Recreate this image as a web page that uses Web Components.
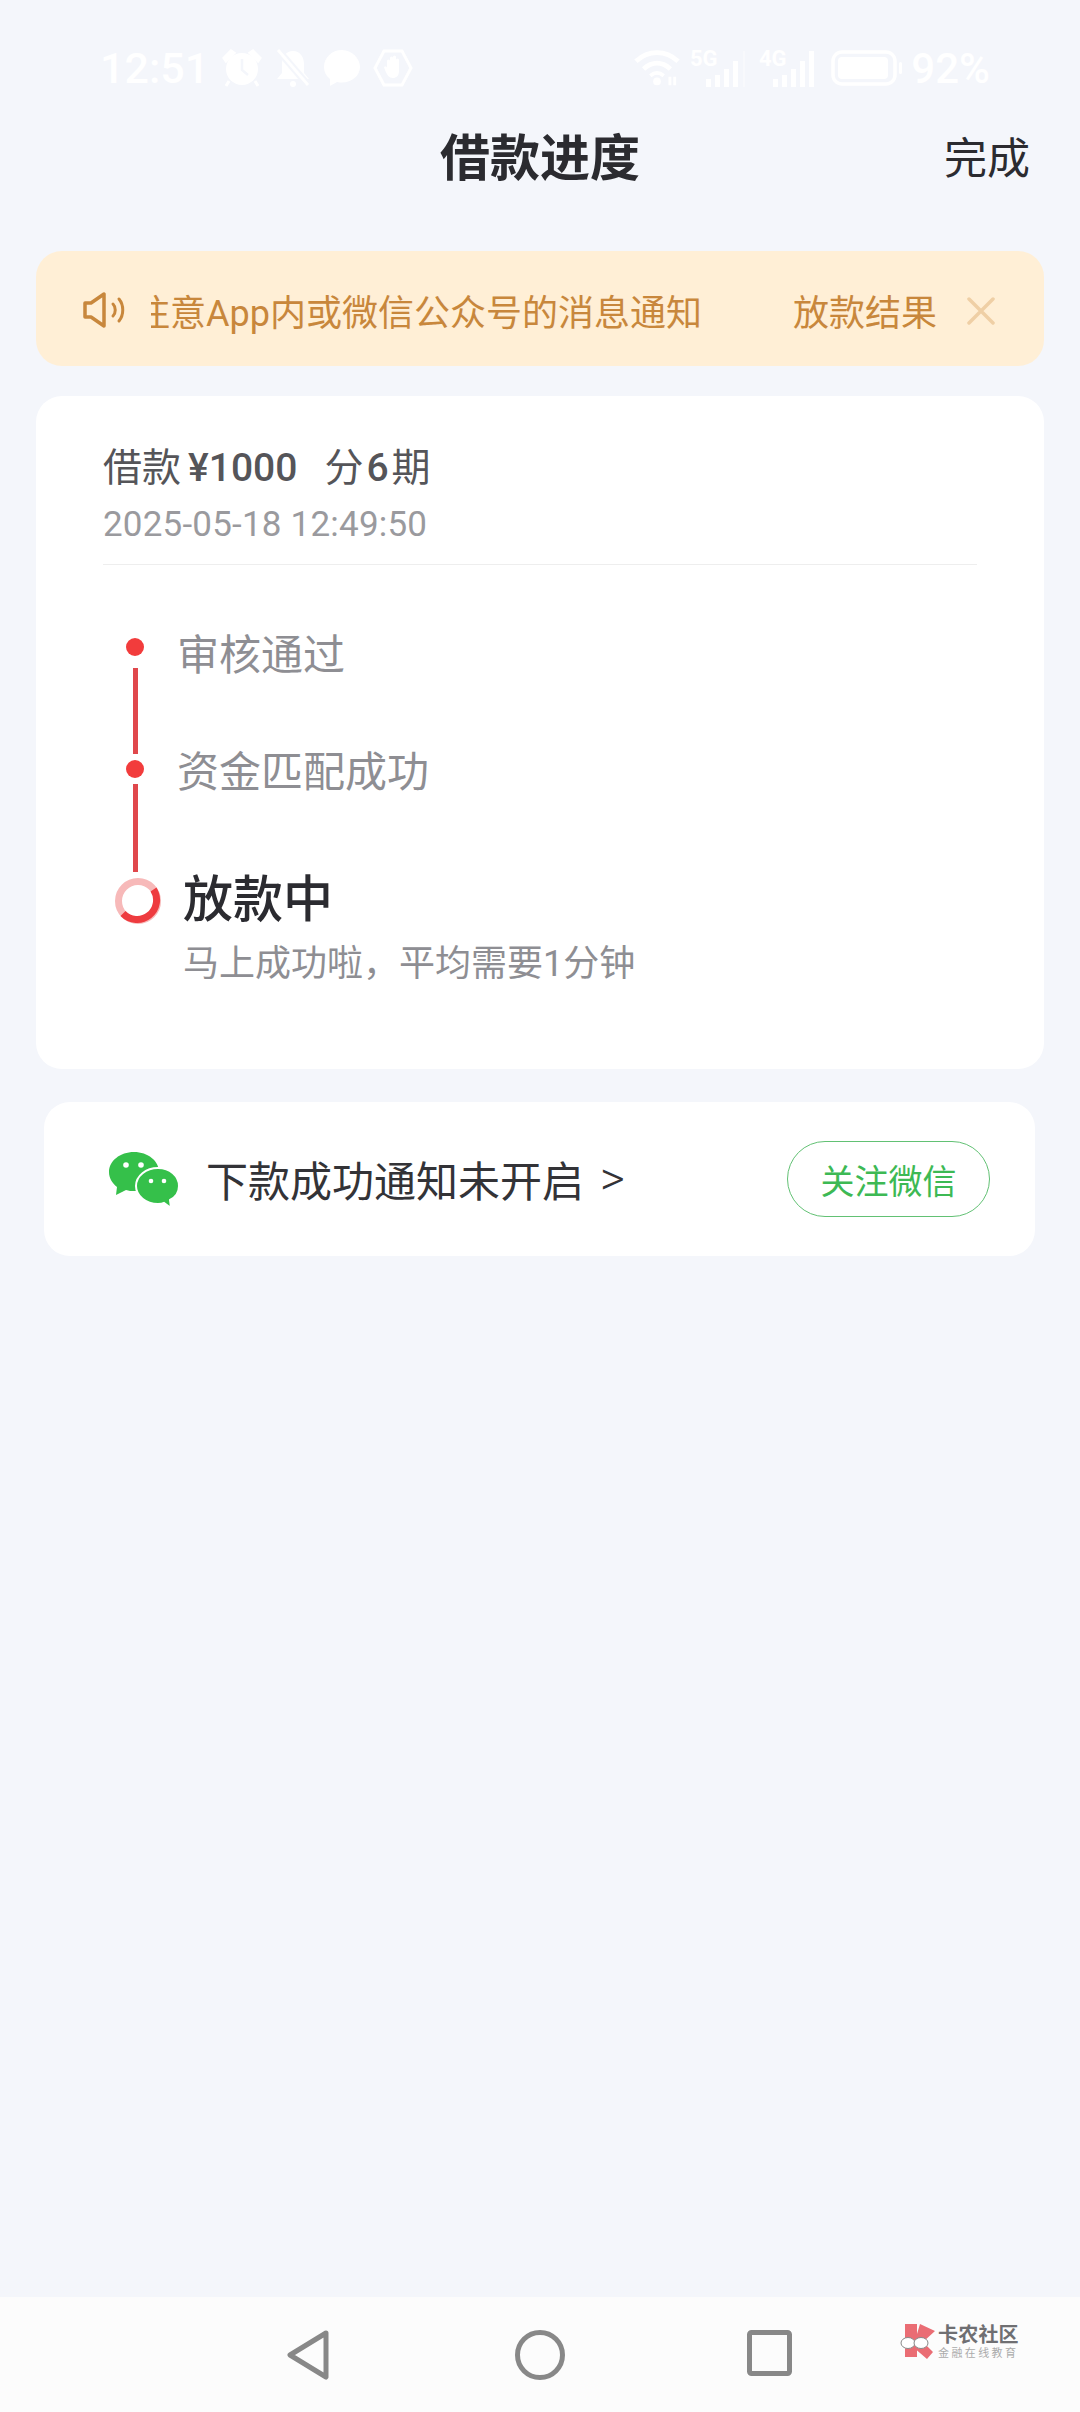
<!DOCTYPE html>
<html lang="zh">
<head>
<meta charset="utf-8">
<title>借款进度</title>
<style>
	html, body { margin: 0; padding: 0; }
	body {
		width: 1080px;
		height: 2412px;
		overflow: hidden;
		background: #f4f6fb;
		display: flex;
		flex-direction: column;
		font-family: Roboto, "Noto Sans CJK SC", sans-serif;
	}
	.fill { flex: 1; }
	loan-card b { font-weight: 500; }
	.amount { margin: 0 27px 0 7px; }
	.term { margin: 0 3px; }
</style>
</head>
<body>
<status-bar></status-bar>
<app-header action="完成">借款进度</app-header>
<notice-banner action="放款结果">请注意App内或微信公众号的消息通知</notice-banner>
<loan-card>
	<span slot="title">借款<b class="amount">¥1000</b>分<b class="term">6</b>期</span>
	<span slot="date">2025-05-18 12:49:50</span>
	<progress-rail slot="rail"></progress-rail>
	<step-text slot="steps" offset="0" top="1">审核通过</step-text>
	<step-text slot="steps" offset="0" top="57">资金匹配成功</step-text>
	<step-text slot="steps" offset="6" top="67" current hint="马上成功啦，平均需要1分钟">放款中</step-text>
</loan-card>
<follow-card action="关注微信">下款成功通知未开启</follow-card>
<div class="fill"></div>
<nav-bar></nav-bar>

<script>
class StatusBar extends HTMLElement {
	constructor() {
		super();
		this.attachShadow({ mode: 'open' });
		this.shadowRoot.innerHTML = `
			<style>
				:host { display: flex; align-items: center; height: 100px; padding: 36px 90px 0 100px; box-sizing: border-box; color: #fff; font-size: 42px; font-weight: 500; }
				svg { display: block; fill: #fff; flex: none; }
				.left, .right { display: flex; align-items: center; }
				.right { margin-left: auto; }
				.time { width: 122px; font-size: 43px; }
			</style>
			<div class="left">
				<span class="time">12:51</span>
				<svg width="40" height="38" viewBox="0 0 40 38" style="margin-right:13px"><circle cx="20" cy="20" r="16"/><path d="M2 9 9 2l3 2-8 8zM38 9l-7-7-3 2 8 8zM7 32l-3 5M33 32l3 5" stroke="#fff" stroke-width="3"/><path d="M20 10v11l6 5" stroke="#f4f6fb" stroke-width="2.500" fill="none"/></svg>
				<svg width="36" height="38" viewBox="0 0 36 38" style="margin-right:12px"><path d="M18 2c-7 0-11 6-11 13v9l-5 6h32l-5-6v-9C29 8 25 2 18 2z"/><circle cx="18" cy="35" r="3"/><path d="M3 1l30 35" stroke="#f4f6fb" stroke-width="7"/><path d="M3 1l30 35" stroke="#fff" stroke-width="3"/></svg>
				<svg width="38" height="38" viewBox="0 0 38 38" style="margin-right:12px"><path d="M19 1C9 1 1 8.500 1 18c0 5 2 9 6 12v7l7-4c2 .5 3 .5 5 .5 10 0 18-7 18-15.500S29 1 19 1z"/></svg>
				<svg width="40" height="40" viewBox="0 0 40 40"><path d="M11 3h18l9 17-9 17H11L2 20z" fill="none" stroke="#fff" stroke-width="3"/><path d="M14 20v-7a1.500 1.500 0 0 1 3 0v-3a1.500 1.500 0 0 1 3 0v-1a1.500 1.500 0 0 1 3 0v3a1.500 1.500 0 0 1 3 0v11c0 5-3 7-6 7-4 0-6-3-8-8l-1-3c2-1 3 0 3 1z"/></svg>
			</div>
			<div class="right">
				<svg width="46" height="38" viewBox="0 0 48 38" style="margin-right:10px"><path d="M2 12c13-12 31-12 44 0" stroke="#fff" stroke-width="5" fill="none"/><path d="M10 20c9-8 19-8 28 0" stroke="#fff" stroke-width="5" fill="none"/><path d="M17 27c5-4 9-4 14 0" stroke="#fff" stroke-width="4" fill="none"/><circle cx="24" cy="33" r="4"/><path d="M36 28h3v9h-3zM41 28h3v9h-3z"/></svg>
				<svg width="58" height="42" viewBox="0 -4 58 42" style="margin:-4px 11px 0 0"><text x="0" y="17" font-size="22" font-weight="700" font-family="Roboto" fill="#fff">5G</text><path d="M16 30h5v8h-5zM25 26h5v12h-5zM34 20h5v18h-5zM43 12h5v26h-5z"/><path d="M53 2h2v36h-2z" opacity=".4"/></svg>
				<svg width="58" height="42" viewBox="0 -4 58 42" style="margin:-4px 14px 0 0"><text x="0" y="17" font-size="22" font-weight="700" font-family="Roboto" fill="#fff">4G</text><path d="M14 30h5v8h-5zM23 26h5v12h-5zM32 20h5v18h-5zM41 12h5v26h-5zM50 2h5v36h-5z"/></svg>
				<svg width="72" height="36" viewBox="0 0 72 36" style="margin-right:8px"><rect x="2" y="2" width="62" height="32" rx="9" fill="none" stroke="#fff" stroke-width="3.500"/><rect x="7" y="7" width="50" height="22" rx="4"/><rect x="68" y="12" width="3" height="12" rx="1.500"/></svg>
				<span>92%</span>
			</div>`;
	}
}
customElements.define('status-bar', StatusBar);

class AppHeader extends HTMLElement {
	constructor() {
		super();
		this.attachShadow({ mode: 'open' });
		this.shadowRoot.innerHTML = `
			<style>
				:host { display: grid; grid-template-columns: 1fr auto 1fr; align-items: center; height: 118px; color: #2b2b30; }
				h1 { grid-column: 2; margin: 0; font-size: 50px; font-weight: 700; line-height: 60px; }
				span { justify-self: end; padding-right: 50px; padding-bottom: 9px; font-size: 43px; }
			</style>
			<h1><slot></slot></h1>
			<span>${this.getAttribute('action')}</span>`;
	}
}
customElements.define('app-header', AppHeader);

class NoticeBanner extends HTMLElement {
	constructor() {
		super();
		this.attachShadow({ mode: 'open' });
		this.shadowRoot.innerHTML = `
			<style>
				:host { display: flex; align-items: center; height: 115px; margin: 33px 36px 0; padding: 2px 49px 0 47px; box-sizing: border-box; border-radius: 26px; background: #ffefd6; color: #c8873c; font-size: 36px; }
				svg { display: block; flex: none; }
				.track { width: 551px; margin-left: 26px; display: flex; justify-content: flex-end; overflow: hidden; white-space: nowrap; }
				.track span { flex: none; }
				.action { margin-left: 91px; white-space: nowrap; }
				.close { margin-left: auto; margin-top: 2px; }
			</style>
			<svg width="42" height="36" viewBox="0 0 42 36" fill="none" stroke="#c8873c" stroke-width="3.500" stroke-linejoin="round" stroke-linecap="round"><path d="M2 11h6L21 2v32L8 25H2z"/><path d="M30 12c3 3 3 9 0 12M36 7c5 6 5 16 0 22" stroke-width="3"/></svg>
			<div class="track"><span><slot></slot></span></div>
			<span class="action">${this.getAttribute('action')}</span>
			<svg class="close" width="28" height="28" viewBox="0 0 28 28" stroke="#efcfa5" stroke-width="3.500" stroke-linecap="round"><path d="M2 2l24 24M26 2 2 26"/></svg>`;
	}
}
customElements.define('notice-banner', NoticeBanner);

class LoanCard extends HTMLElement {
	constructor() {
		super();
		this.attachShadow({ mode: 'open' });
		this.shadowRoot.innerHTML = `
			<style>
				:host { display: block; height: 673px; margin: 30px 36px 0; padding: 47px 67px 0; box-sizing: border-box; border-radius: 26px; background: #fff; }
				.title { font-size: 39px; line-height: 50px; color: #555559; }
				.date { margin-top: 10px; padding-bottom: 17px; border-bottom: 1.500px solid #eeeeee; font-size: 35px; line-height: 44px; letter-spacing: .2px; color: #9a9a9e; }
				.body { display: flex; align-items: flex-start; margin-top: 60px; }
				.steps { display: flex; flex-direction: column; }
			</style>
			<div class="title"><slot name="title"></slot></div>
			<div class="date"><slot name="date"></slot></div>
			<div class="body">
				<slot name="rail"></slot>
				<div class="steps"><slot name="steps"></slot></div>
			</div>`;
	}
}
customElements.define('loan-card', LoanCard);

class ProgressRail extends HTMLElement {
	constructor() {
		super();
		this.attachShadow({ mode: 'open' });
		this.shadowRoot.innerHTML = `
			<style>
				:host { display: flex; flex-direction: column; align-items: center; width: 46px; margin-left: 11px; margin-top: 13px; flex: none; }
				.dot { width: 18px; height: 18px; border-radius: 50%; background: #f23c3c; margin-left: -4px; }
				.line { width: 5px; background: #e0484c; margin-left: -4px; }
				.one { height: 86px; margin-top: 12px; margin-bottom: 6px; }
				.two { height: 88px; margin-top: 6px; margin-bottom: 6px; }
				svg { display: block; margin-left: 2px; }
			</style>
			<div class="dot"></div>
			<div class="line one"></div>
			<div class="dot"></div>
			<div class="line two"></div>
			<svg width="46" height="46" viewBox="0 0 46 46" fill="none" stroke-width="7">
				<circle cx="23" cy="23" r="19.500" stroke="#f7b9b9"/>
				<path d="M38.500 11.500A19.500 19.500 0 0 1 8 35.500" stroke="#ee3b3f"/>
			</svg>`;
	}
}
customElements.define('progress-rail', ProgressRail);

class StepText extends HTMLElement {
	constructor() {
		super();
		this.attachShadow({ mode: 'open' });
		const hint = this.getAttribute('hint');
		this.shadowRoot.innerHTML = `
			<style>
				:host { display: block; margin-left: ${+this.getAttribute('offset') + 17}px; margin-top: ${this.getAttribute('top')}px; white-space: nowrap; }
				.name { font-size: 42px; line-height: 60px; color: #8e8e93; }
				:host([current]) .name { font-size: 50px; font-weight: 500; color: #2b2b30; }
				.hint { margin-top: 12px; font-size: 36px; line-height: 44px; color: #8e8e93; }
			</style>
			<div class="name"><slot></slot></div>
			${hint ? `<div class="hint">${hint}</div>` : ''}`;
	}
}
customElements.define('step-text', StepText);

class FollowCard extends HTMLElement {
	constructor() {
		super();
		this.attachShadow({ mode: 'open' });
		this.shadowRoot.innerHTML = `
			<style>
				:host { display: flex; align-items: center; height: 154px; margin: 33px 45px 0 44px; padding-left: 64px; padding-right: 45px; box-sizing: border-box; border-radius: 26px; background: #fff; color: #333337; font-size: 42px; }
				svg { display: block; flex: none; margin: 4px 26px 0 1px; }
				.label { margin-bottom: 2px; }
				.arrow { margin-left: 16px; margin-bottom: 2px; font-size: 48px; font-weight: 300; }
				button { margin-left: auto; width: 203px; height: 76px; padding: 0; border: 1.500px solid #62c174; border-radius: 38px; background: #fff; color: #3db954; font: inherit; font-size: 34px; }
			</style>
			<svg width="71" height="58" viewBox="0 0 71 58">
				<path d="M25 0C11 0 0 9 0 20c0 6 3 11 8 15l-1 8 10-5c3 1 5 1 8 1 14 0 25-8 25-19S39 0 25 0z" fill="#35c04a"/>
				<path d="M49 16c-12 0-22 8-22 18s10 18 22 18c2 0 4 0 6-1l7 5-1-8c6-3 9-8 9-14 0-10-9-18-21-18z" fill="#35c04a" stroke="#fff" stroke-width="2"/>
				<circle cx="17" cy="13" r="2.800" fill="#fff"/><circle cx="32" cy="13" r="2.800" fill="#fff"/>
				<circle cx="42" cy="29" r="2.300" fill="#fff"/><circle cx="55" cy="29" r="2.300" fill="#fff"/>
			</svg>
			<span class="label"><slot></slot></span>
			<span class="arrow">&gt;</span>
			<button>${this.getAttribute('action')}</button>`;
	}
}
customElements.define('follow-card', FollowCard);

class NavBar extends HTMLElement {
	constructor() {
		super();
		this.attachShadow({ mode: 'open' });
		this.shadowRoot.innerHTML = `
			<style>
				:host { display: flex; align-items: flex-start; height: 115px; padding: 33px 0 0 287px; box-sizing: border-box; background: #fcfcfc; position: relative; }
				svg { display: block; flex: none; }
				.mark { position: absolute; left: 900px; top: 27px; display: flex; align-items: center; gap: 3px; }
				.name { font-size: 20px; line-height: 20px; font-weight: 700; color: #6f6f72; white-space: nowrap; letter-spacing: .2px; }
				.sub { margin-top: 3px; font-size: 11px; line-height: 12px; color: #ababab; white-space: nowrap; letter-spacing: 2.400px; }
			</style>
			<svg width="44" height="50" viewBox="0 0 44 50" fill="none" stroke="#888" stroke-width="5" stroke-linejoin="round" style="margin-right:184px"><path d="M39 3 3 25l36 22z"/></svg>
			<svg width="50" height="50" viewBox="0 0 50 50" fill="none" stroke="#888" stroke-width="5" style="margin-right:182px"><circle cx="25" cy="25" r="22.500"/></svg>
			<svg width="45" height="46" viewBox="0 0 45 46" fill="none" stroke="#888" stroke-width="5" stroke-linejoin="round"><rect x="2.500" y="2.500" width="40" height="41" rx="2"/></svg>
			<div class="mark">
				<svg width="35" height="36" viewBox="0 0 35 36">
					<path d="M5 0h12v33H5zM17 10 20 0l15 7-12 11 10 10-6 7-14-12z" fill="#ea6d74"/>
					<ellipse cx="8" cy="19" rx="7" ry="5.500" fill="#fff" stroke="#8a8a8a"/>
					<ellipse cx="21" cy="19" rx="7" ry="5.500" fill="#fff" stroke="#8a8a8a"/>
				</svg>
				<div>
					<div class="name">卡农社区</div>
					<div class="sub">金融在线教育</div>
				</div>
			</div>`;
	}
}
customElements.define('nav-bar', NavBar);
</script>
</body>
</html>
